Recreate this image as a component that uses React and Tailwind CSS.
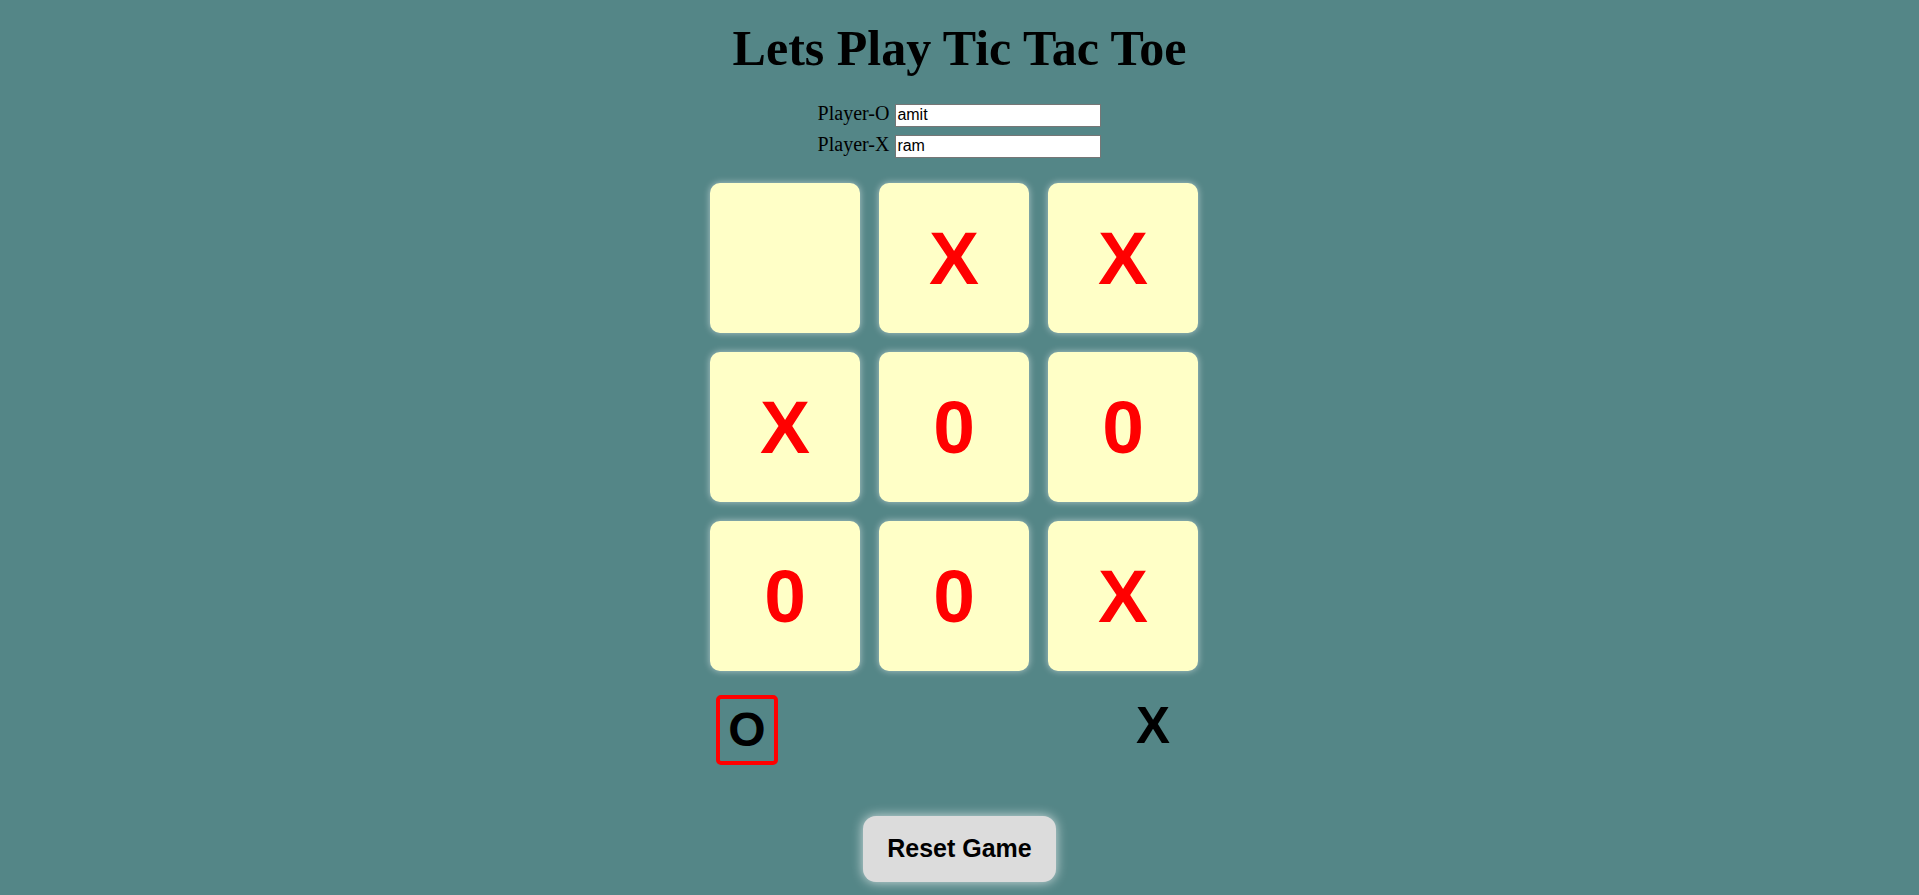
import { useState } from "react";

const start = ["", "X", "X", "X", "0", "0", "0", "0", "X"];

export default function App() {
  const [boxes, setBoxes] = useState(start);
  const [turnO, setTurnO] = useState(true);
  const [names, setNames] = useState({ o: "amit", x: "ram" });

  const play = (i) => {
    if (boxes[i]) return;
    const next = [...boxes];
    next[i] = turnO ? "0" : "X";
    setBoxes(next);
    setTurnO(!turnO);
  };

  const reset = () => {
    setBoxes(Array(9).fill(""));
    setTurnO(true);
  };

  return (
    <div className="min-h-screen bg-[#548687] flex flex-col items-center text-black">
      {/* Title */}
      <h1 className="mt-[20px] text-[50px] leading-[57px] font-bold font-['Liberation_Serif',serif]">
        Lets Play Tic Tac Toe
      </h1>

      {/* Player names */}
      <div className="mt-[25px] flex flex-col gap-[8px]">
        <div className="flex items-baseline gap-[6px] h-[23px]">
          <label className="text-[20px] leading-[23px] font-['Liberation_Serif',serif]">Player-O</label>
          <input
            value={names.o}
            onChange={(e) => setNames({ ...names, o: e.target.value })}
            className="w-[206px] h-[23px] bg-white border border-[#767676] px-[1px] text-[16px] font-['Liberation_Sans',sans-serif] outline-none"
          />
        </div>
        <div className="flex items-baseline gap-[6px] h-[23px]">
          <label className="text-[20px] leading-[23px] font-['Liberation_Serif',serif]">Player-X</label>
          <input
            value={names.x}
            onChange={(e) => setNames({ ...names, x: e.target.value })}
            className="w-[206px] h-[23px] bg-white border border-[#767676] px-[1px] text-[16px] font-['Liberation_Sans',sans-serif] outline-none"
          />
        </div>
      </div>

      {/* Board */}
      <div className="mt-[27px] pr-[11px]">
        <div className="grid grid-cols-3 gap-[19px]">
          {boxes.map((b, i) => (
            <button
              key={i}
              onClick={() => play(i)}
              className="w-[150px] h-[150px] rounded-[10px] bg-[#ffffc7] shadow-[0_0_7px_rgba(255,255,255,0.55)] flex items-center justify-center text-[75px] font-bold text-[#ff0000] font-['Liberation_Sans',sans-serif]"
            >
              {b}
            </button>
          ))}
        </div>
      </div>

      {/* Turn indicator */}
      <div className="mt-[24px] pr-[11px]">
        <div className="w-[488px] h-[70px] flex justify-between items-start pl-[6px] pr-[24px] font-bold font-['Liberation_Sans',sans-serif]">
          <div
            className={`w-[62px] h-[70px] rounded-[5px] border-4 flex items-center justify-center text-[48px] ${
              turnO ? "border-[#ff0000]" : "border-transparent"
            }`}
          >
            O
          </div>
          <div
            className={`mt-[-4px] h-[70px] flex items-center text-[51px] border-4 rounded-[5px] ${
              turnO ? "border-transparent" : "border-[#ff0000]"
            }`}
          >
            X
          </div>
        </div>
      </div>

      {/* Reset */}
      <button
        onClick={reset}
        className="mt-[51px] w-[193px] h-[66px] rounded-[13px] bg-[#dcdcdc] shadow-[0_0_12px_rgba(255,255,255,0.75)] text-[25px] font-bold font-['Liberation_Sans',sans-serif]"
      >
        Reset Game
      </button>
      <div className="h-[20px]" />
    </div>
  );
}
